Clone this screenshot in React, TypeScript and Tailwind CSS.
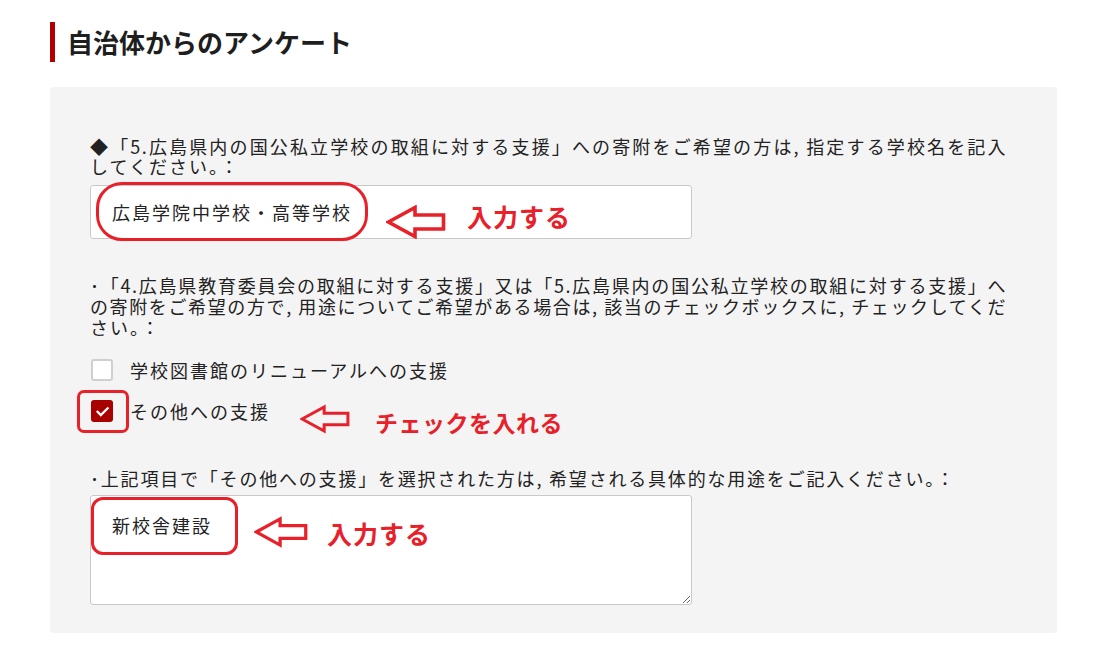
import React from 'react';

const jp = 'font-["Noto_Sans_CJK_JP","Noto_Sans",sans-serif]';

function LeftArrow({ className }: { className: string }) {
  return (
    <svg viewBox="0 0 60 34" className={className} fill="none">
      <polygon
        points="2.5,17 29,2.5 29,10 57.5,10 57.5,24 29,24 29,31.5"
        stroke="#e8202a"
        strokeWidth="3.6"
        strokeLinejoin="miter"
      />
    </svg>
  );
}

// a wrapped line that is stretched to the full column, like the justified text in the form
function FullLine({ children }: { children: React.ReactNode }) {
  return <span className="block whitespace-nowrap [text-align-last:justify]">{children}</span>;
}

function CheckRow({ label, checked }: { label: string; checked?: boolean }) {
  return (
    <label className="flex items-center gap-[17px]">
      <span
        className={
          checked
            ? 'flex h-[22px] w-[22px] items-center justify-center rounded-[3px] bg-[#a80000]'
            : 'h-[22px] w-[22px] rounded-[3px] border-2 border-[#cfcfcf] bg-white'
        }
      >
        {checked && (
          <svg viewBox="0 0 16 16" className="h-[17px] w-[17px]" fill="none">
            <path d="M2.6 7.6 6.4 11.4 13.6 4.2" stroke="#fff" strokeWidth="2.1" />
          </svg>
        )}
      </span>
      <span className="leading-[21px] tracking-[2px]">{label}</span>
    </label>
  );
}

export default function App() {
  return (
    <div className={`relative min-h-screen w-[1109px] bg-white text-[#222] ${jp}`}>
      <div className="px-[50px] pt-[22px]">
        <h2 className="border-l-[5px] border-[#b00000] pl-[12px] text-[26px] font-bold leading-[40px] text-[#1e1e1e]">
          自治体からのアンケート
        </h2>

        <div className="mt-[25px] w-[1007px] rounded-[3px] bg-[#f4f4f4] pb-[28px] pl-10 pr-[50px] pt-[49px] text-[18px] tracking-[1.5px]">
          <p className="leading-[20px]">
            <FullLine>◆「5.広島県内の国公私立学校の取組に対する支援」への寄附をご希望の方は, 指定する学校名を記入</FullLine>
            <span className="tracking-[2px]">してください。：</span>
          </p>
          <input
            readOnly
            value="広島学院中学校・高等学校"
            className="mt-[9px] block h-[54px] w-[602px] rounded-[3px] border border-[#c9c9c9] bg-white px-[21px] text-[18px] tracking-[2px] text-[#222] outline-none"
          />

          <p className="mt-[36px] leading-[21px]">
            <FullLine>･「4.広島県教育委員会の取組に対する支援」又は「5.広島県内の国公私立学校の取組に対する支援」へ</FullLine>
            <FullLine>の寄附をご希望の方で, 用途についてご希望がある場合は, 該当のチェックボックスに, チェックしてくだ</FullLine>
            <span className="tracking-[2px]">さい。：</span>
          </p>

          <div className="mt-[21px] flex flex-col gap-[19px] pl-[1px]">
            <CheckRow label="学校図書館のリニューアルへの支援" />
            <CheckRow label="その他への支援" checked />
          </div>

          <p className="mt-[46px] leading-[21px] tracking-[1.8px]">
            ･上記項目で「その他への支援」を選択された方は, 希望される具体的な用途をご記入ください。：
          </p>
          <textarea
            readOnly
            defaultValue="新校舎建設"
            className="mt-[6px] block h-[110px] w-[602px] rounded-[3px] border border-[#c9c9c9] bg-white px-[21px] pt-[19px] text-[18px] leading-[21px] tracking-[2px] text-[#222] outline-none"
          />
        </div>
      </div>

      {/* red annotations drawn over the form */}
      <div className="absolute left-[96px] top-[182px] h-[59px] w-[272px] rounded-[26px] border-[3px] border-[#e8202a]" />
      <LeftArrow className="absolute left-[386px] top-[205px] h-[34px] w-[60px]" />
      <span className="absolute left-[467px] top-[199px] text-[25px] font-bold leading-[34px] tracking-[1px] text-[#e8202a]">
        入力する
      </span>

      <div className="absolute left-[77px] top-[390px] h-[43px] w-[52px] rounded-[7px] border-[3px] border-[#e8202a]" />
      <LeftArrow className="absolute left-[300px] top-[402px] h-[34px] w-[50px]" />
      <span className="absolute left-[375px] top-[405px] text-[23px] font-bold leading-[34px] tracking-[0.5px] text-[#e8202a]">
        チェックを入れる
      </span>

      <div className="absolute left-[91px] top-[497px] h-[58px] w-[147px] rounded-[12px] border-[3px] border-[#e8202a]" />
      <LeftArrow className="absolute left-[254px] top-[515px] h-[34px] w-[54px]" />
      <span className="absolute left-[327px] top-[516px] text-[25px] font-bold leading-[34px] tracking-[1px] text-[#e8202a]">
        入力する
      </span>
    </div>
  );
}
